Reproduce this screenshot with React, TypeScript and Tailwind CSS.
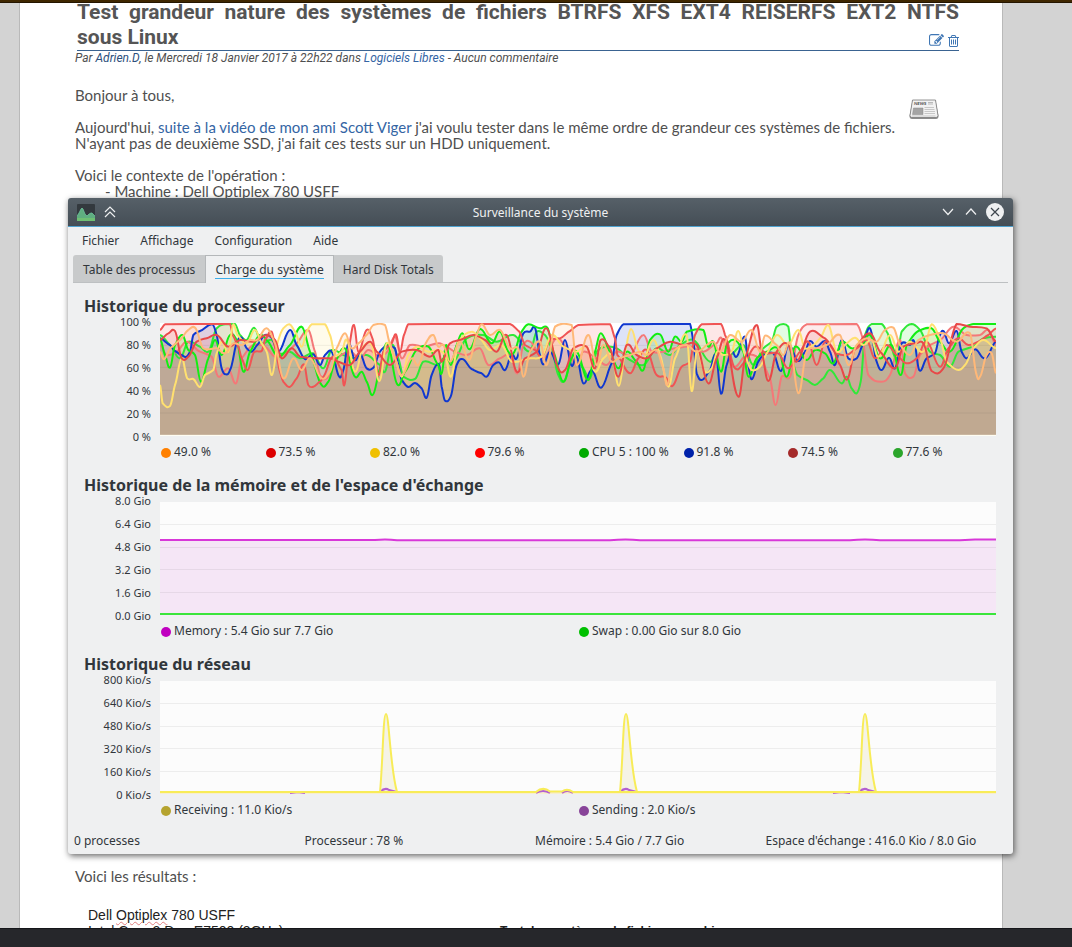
import type { ReactNode } from 'react';

type Trace = { color: string; points: number[][] };

// Samples are stored in three runs; shift moves a run to its place on the x axis.
function shift(dx: number, run: string) {
  return run.split(' ').map((pair) => {
    const [x, y] = pair.split(',').map(Number);
    return [x + dx, y];
  });
}

function cpu(color: string, a: string, b: string, c: string): Trace {
  return { color, points: [...shift(-30, a), ...shift(810, b), ...shift(1650, c)] };
}

const cpuTraces: Trace[] = [
  cpu(
    '#30e838',
    '30,60 60,90 90,130 115,80 150,95 175,110 200,40 225,28 255,27 270,60 290,75 312,38 335,85 365,75 390,115 420,110 450,130 490,115 520,160 545,105 580,120 610,130 650,120 690,150 705,170 725,90 745,130 760,185 795,192 820,140 865,150',
    '40,130 70,140 110,70 160,60 200,80 250,60 300,110 320,50 345,60 365,100 385,180 402,198 430,120 460,160 480,190 500,110 530,95 560,100 600,135 640,150 680,100 720,120 750,90 790,75 840,140',
    '20,110 60,120 100,90 130,150 160,100 185,80 200,35 220,27 235,35 245,130 262,180 290,195 315,210 340,190 360,165 395,205 410,185 425,220 440,235 452,200 465,60 485,27 515,27 530,50 560,130 575,50 605,27 630,45 660,110 690,120 720,155 745,110 790,95 820,70 858,65'
  ),
  cpu(
    '#f47878',
    '30,90 50,120 80,110 110,80 150,110 185,125 205,185 235,160 258,205 275,130 310,90 345,95 375,125 400,120 440,85 475,45 495,110 510,180 530,190 560,130 600,110 630,130 655,105 690,125 712,110 735,65 755,130 780,90 820,95 865,85',
    '40,90 75,110 110,120 150,100 175,150 210,130 240,120 262,175 280,90 300,80 340,130 380,70 410,100 440,150 460,110 500,130 530,150 560,110 600,120 640,60 665,110 700,110 735,100 780,95 820,110 860,85',
    '35,70 70,155 110,120 150,130 180,190 197,270 215,185 240,185 265,60 290,28 440,27 455,60 475,180 515,200 540,180 570,75 585,175 610,185 630,120 660,90 690,75 730,35 770,60 810,60 835,45 858,90'
  ),
  cpu(
    '#1038d0',
    '30,70 60,90 75,108 95,120 108,126 120,110 130,60 150,48 187,28 200,60 215,160 228,178 240,165 262,80 275,68 290,100 305,110 320,92 345,60 365,68 385,110 420,45 440,90 465,132 490,118 510,150 525,120 545,110 568,185 580,165 595,85 615,135 630,115 650,160 670,158 690,110 710,92 735,100 745,150 755,195 775,216 795,204 815,220 830,248 845,180 860,150 868,152',
    '35,215 45,257 62,245 80,150 97,132 125,162 155,175 170,185 190,150 207,142 225,165 245,118 260,130 280,55 300,50 315,38 330,120 340,148 360,110 385,148 405,75 425,152 440,125 460,205 485,165 513,218 545,145 560,60 580,28 780,27 790,80 800,175 815,195 840,165 858,120',
    '33,236 50,150 65,110 80,125 105,65 115,150 125,193 145,140 160,120 190,115 213,168 235,90 265,138 285,110 300,78 320,95 345,78 360,110 375,150 395,75 415,130 440,130 460,85 480,40 500,140 515,165 537,128 555,160 575,85 600,90 612,78 628,166 650,130 675,115 690,60 700,48 717,85 740,48 755,110 770,130 795,103 825,130 858,80'
  ),
  cpu(
    '#12ee12',
    '30,70 45,120 60,158 75,90 97,60 115,105 135,120 153,200 175,130 195,75 215,120 240,60 260,75 280,170 300,110 330,60 350,75 385,125 420,90 455,35 480,110 515,210 535,200 555,140 585,100 615,185 635,170 650,200 668,240 690,160 712,85 742,208 765,170 800,105 835,95 865,150',
    '35,175 48,90 62,150 80,90 97,55 118,103 150,42 185,85 210,50 235,110 250,115 275,50 295,28 330,40 352,38 370,110 400,200 425,130 440,110 475,195 495,110 512,55 540,110 565,160 590,110 620,140 640,165 660,75 690,58 715,110 735,65 755,80 770,50 820,45 835,95 850,80',
    '33,170 50,90 75,75 100,110 115,185 140,130 170,110 205,100 230,185 255,95 290,135 315,105 345,115 370,145 395,80 425,100 455,90 480,60 510,130 545,90 572,180 590,90 625,48 665,40 690,80 720,110 760,40 790,27 858,27'
  ),
  cpu(
    '#f05454',
    '30,45 45,28 240,27 248,60 265,95 275,130 293,165 312,112 335,108 345,75 365,50 378,110 390,170 400,200 418,216 440,190 462,148 475,210 490,215 510,200 520,185 548,125 575,165 583,210 598,90 612,30 625,110 650,45 668,72 685,180 700,110 725,85 738,58 750,110 762,60 775,28 865,27',
    '40,27 240,27 268,50 285,90 315,105 335,125 360,75 390,70 420,48 445,30 540,28 555,70 562,120 600,175 625,130 650,105 680,180 705,185 727,213 755,155 780,140 795,60 815,28 865,27',
    '33,27 45,60 75,160 105,140 135,95 170,115 205,115 235,160 270,110 295,80 320,150 345,80 380,115 410,120 440,100 470,75 495,130 530,90 560,120 590,145 620,130 650,80 690,155 715,100 745,70 775,90 805,80 835,60 858,40'
  ),
  cpu(
    '#ffe070',
    '30,210 38,265 60,273 75,210 95,130 112,190 130,192 150,216 165,180 190,165 200,115 215,80 235,110 250,28 262,60 290,85 315,45 335,85 350,110 366,180 385,75 400,40 418,28 435,50 455,95 470,50 485,28 525,28 540,60 555,120 575,110 590,75 615,170 640,95 665,90 688,198 710,85 735,130 755,185 775,120 800,95 835,110 865,105',
    '45,120 63,185 85,80 125,50 150,70 180,105 215,90 245,140 300,130 335,125 365,60 400,95 440,110 470,95 495,170 520,130 545,120 567,212 585,110 603,42 625,105 640,130 670,75 690,120 715,215 735,130 770,60 785,228 800,110 825,170 845,160 862,110',
    '40,120 65,110 85,48 105,120 125,165 150,155 170,115 200,60 235,90 265,45 285,100 310,90 330,70 355,30 380,110 410,85 435,68 460,90 485,75 505,125 540,60 565,110 600,80 640,110 665,28 690,70 710,140 745,165 765,150 790,100 820,75 858,100'
  ),
  cpu(
    '#e84848',
    '30,75 55,55 75,48 95,130 115,125 140,80 170,70 200,60 235,95 270,75 310,80 350,60 375,75 395,130 425,100 450,125 500,130 540,130 565,140 600,150 630,110 660,80 680,110 720,150 755,110 800,105 840,125 865,105',
    '35,140 60,85 90,75 130,60 165,75 200,110 230,60 260,170 285,130 320,110 350,40 385,160 405,165 430,100 470,95 495,160 512,75 540,100 565,185 590,90 620,120 650,130 680,100 720,80 760,90 800,90 835,205 860,130',
    '45,75 85,245 105,130 140,30 155,110 175,198 200,110 230,85 260,140 300,50 345,70 365,95 390,150 412,193 435,100 480,55 510,110 555,160 580,95 620,85 640,85 665,168 700,160 740,27 780,35 830,40 858,80'
  ),
  cpu(
    '#ffb878',
    '30,110 42,133 60,100 90,75 115,45 135,38 160,100 200,100 225,115 250,85 275,90 300,75 320,75 350,40 375,85 400,190 430,130 455,165 480,130 515,190 540,170 560,100 585,55 605,100 625,85 650,60 670,30 690,26 705,30 718,80 735,130 755,180 785,130 805,150 830,80 850,60 865,95',
    '40,90 60,140 90,80 118,135 140,60 155,28 180,60 210,45 240,100 265,100 280,185 300,110 330,80 350,150 375,35 400,26 425,30 440,150 475,60 500,150 520,90 545,140 565,130 600,120 630,110 650,120 680,105 700,160 712,210 730,110 770,90 800,110 850,80',
    '30,110 60,60 95,80 125,45 150,110 165,62 200,90 220,120 240,85 265,235 290,110 320,100 350,90 390,60 415,150 440,90 470,70 500,80 525,45 550,38 570,90 600,120 625,75 660,60 700,55 740,80 780,55 800,180 810,185 830,120 845,115 858,175'
  ),
];

const fillOrder = [0, 7, 1, 5, 3, 2, 6, 4];

// Catmull-Rom through the samples; control points never rise above the 100 % line.
function smooth(points: number[][], top: number) {
  let d = `M${points[0][0]},${points[0][1]}`;
  for (let i = 0; i < points.length - 1; i++) {
    const p0 = points[i - 1] ?? points[i];
    const p1 = points[i];
    const p2 = points[i + 1];
    const p3 = points[i + 2] ?? p2;
    const c1y = Math.max(top, p1[1] + (p2[1] - p0[1]) / 7);
    const c2y = Math.max(top, p2[1] - (p3[1] - p1[1]) / 7);
    const dx = (p2[0] - p1[0]) / 2.4;
    d += `C${p1[0] + dx},${c1y} ${p2[0] - dx},${c2y} ${p2[0]},${p2[1]}`;
  }
  return d;
}

const cpuLegend = [
  { color: '#ff8000', label: '49.0 %' },
  { color: '#dc0000', label: '73.5 %' },
  { color: '#f0c000', label: '82.0 %' },
  { color: '#ff0000', label: '79.6 %' },
  { color: '#00aa00', label: 'CPU 5 : 100 %' },
  { color: '#0022aa', label: '91.8 %' },
  { color: '#a52a2a', label: '74.5 %' },
  { color: '#2ba52b', label: '77.6 %' },
];

const memoryLegend = [
  { color: '#c000c0', label: 'Memory : 5.4 Gio sur 7.7 Gio' },
  { color: '#00c000', label: 'Swap : 0.00 Gio sur 8.0 Gio' },
];

const networkLegend = [
  { color: '#b5a32f', label: 'Receiving : 11.0 Kio/s' },
  { color: '#884499', label: 'Sending : 2.0 Kio/s' },
];

const menus = ['Fichier', 'Affichage', 'Configuration', 'Aide'];
const status = ['0 processes', 'Processeur : 78 %', 'Mémoire : 5.4 Gio / 7.7 Gio', "Espace d'échange : 416.0 Kio / 8.0 Gio"];

function CpuPlot() {
  return (
    <svg viewBox="0 24 2508 339" preserveAspectRatio="none" className="block h-full w-full bg-white">
      {fillOrder.map((n) => (
        <path key={n} d={`${smooth(cpuTraces[n].points, 27)}V360H0Z`} fill={cpuTraces[n].color} fillOpacity="0.14" />
      ))}
      {[91, 157, 226, 294].map((y) => (
        <path key={y} d={`M0,${y}H2508`} stroke="#000" strokeOpacity="0.06" vectorEffect="non-scaling-stroke" />
      ))}
      {cpuTraces.map((t) => (
        <path
          key={t.color}
          d={smooth(t.points, 27)}
          fill="none"
          stroke={t.color}
          strokeWidth="2"
          vectorEffect="non-scaling-stroke"
        />
      ))}
      <path d="M0,361H2508" stroke="#fffdf0" strokeWidth="1" vectorEffect="non-scaling-stroke" />
    </svg>
  );
}

function GridLines() {
  return (
    <>
      {[22, 45, 67, 90].map((y) => (
        <path key={y} d={`M0,${y}.5H836`} stroke="#000" strokeOpacity="0.06" vectorEffect="non-scaling-stroke" />
      ))}
    </>
  );
}

function MemoryPlot() {
  const line = 'M0,38H215Q226,37 237,38.2H450Q466,37 480,38.2H690Q705,37 720,38.2L800,38.2L815,37.6H836';
  return (
    <svg viewBox="0 0 836 113" preserveAspectRatio="none" className="block h-full w-full bg-[#fcfcfc]">
      <path d={`${line}V111H0Z`} fill="#f5e6f6" />
      <GridLines />
      <path d={line} fill="none" stroke="#d838d8" strokeWidth="2" vectorEffect="non-scaling-stroke" />
      <path d="M0,112H836" stroke="#3be53b" strokeWidth="2" vectorEffect="non-scaling-stroke" />
    </svg>
  );
}

function NetworkPlot() {
  const peaks = [226, 466, 705];
  return (
    <svg viewBox="0 0 836 113" preserveAspectRatio="none" className="block h-full w-full bg-[#fcfcfc]">
      <GridLines />
      <path d="M0,112H836" stroke="#f3dfa0" strokeWidth="1" vectorEffect="non-scaling-stroke" />
      <path
        d="M130,112L138,111L145,112M376,112Q383,108 390,112M402,112Q407,108 413,112M673,112L681,111L690,112"
        fill="none"
        stroke="#b45fd0"
        strokeWidth="2"
        vectorEffect="non-scaling-stroke"
      />
      {peaks.map((x) => (
        <path key={x} d={`M${x - 6},111C${x - 3},80 ${x - 3},33 ${x},33C${x + 3},33 ${x + 4},86 ${x + 11},111Z`} fill="#f5f3e6" />
      ))}
      {peaks.map((x) => (
        <path
          key={x}
          d={`M${x - 6},111Q${x - 1},106 ${x + 3},109L${x + 11},111`}
          fill="none"
          stroke="#b45fd0"
          strokeWidth="2"
          vectorEffect="non-scaling-stroke"
        />
      ))}
      <path
        d={`M0,111H376Q383,105 390,110.5H402Q407,107 413,111H836${peaks
          .map((x) => `M${x - 6},111C${x - 3},80 ${x - 3},33 ${x},33C${x + 3},33 ${x + 4},86 ${x + 11},111`)
          .join('')}`}
        fill="none"
        stroke="#f8ec58"
        strokeWidth="2"
        vectorEffect="non-scaling-stroke"
      />
    </svg>
  );
}

interface GraphProps {
  title: string;
  axis: string[];
  legend: { color: string; label: string }[];
  columns: string;
  children: ReactNode;
}

function Graph({ title, axis, legend, columns, children }: GraphProps) {
  return (
    <section>
      <h2 className="text-base leading-5 font-bold text-[#31363b]">{title}</h2>
      <div className="mt-[7px] flex h-[113px]">
        <div className="-my-[7px] mr-[9px] flex w-[67px] shrink-0 flex-col justify-between text-right text-[11px] leading-3">
          {axis.map((a) => (
            <span key={a}>{a}</span>
          ))}
        </div>
        <div className="min-w-0 flex-1">{children}</div>
      </div>
      <ul className={`mt-1.5 ml-[76px] grid h-5 items-center ${columns}`}>
        {legend.map((l) => (
          <li key={l.label} className="flex items-center gap-[3px] pl-px whitespace-nowrap">
            <svg viewBox="0 0 10 10" className="mt-0.5 size-[10px]">
              <circle cx="5" cy="5" r="5" fill={l.color} />
            </svg>
            {l.label}
          </li>
        ))}
      </ul>
    </section>
  );
}

function TitleBar() {
  return (
    <header className="grid h-[29px] grid-cols-[1fr_auto_1fr] items-center rounded-t-[3px] border-b border-[#4fa3d1] bg-linear-to-b from-[#566068] to-[#454e56] px-[9px] text-[#eff0f1]">
      <div className="flex items-center gap-[9px]">
        <svg viewBox="0 0 18 17" className="h-[17px] w-[18px]">
          <rect width="18" height="17" rx="1" fill="#33393e" />
          <path d="M0,17V12L2,9L4,5L5,4L6,5L8,10L10,12L12,10L14,9L15,9L16,10L18,12V17Z" fill="#5fae80" />
          <path d="M0,12L2,9L4,5L5,4L6,5L8,10L10,12L12,10L14,9L15,9L16,10L18,12" fill="none" stroke="#73c8a5" strokeWidth="0.7" />
          <path d="M0,14H18V17H0Z" fill="#6fbf73" />
        </svg>
        <button type="button" aria-label="Garder au-dessus">
          <svg viewBox="0 0 12 12" className="size-3" fill="none" stroke="currentColor" strokeWidth="1.2">
            <path d="M1,6L6,1L11,6M1,11L6,6L11,11" />
          </svg>
        </button>
      </div>
      <h1 className="pt-0.5">Surveillance du système</h1>
      <div className="flex items-center justify-end gap-[7px]">
        <button type="button" aria-label="Réduire" className="grid w-4 place-items-center">
          <svg viewBox="0 0 12 8" className="h-2 w-3" fill="none" stroke="currentColor" strokeWidth="1.2">
            <path d="M1,1L6,6.500L11,1" />
          </svg>
        </button>
        <button type="button" aria-label="Maximiser" className="grid w-4 place-items-center">
          <svg viewBox="0 0 12 8" className="h-2 w-3" fill="none" stroke="currentColor" strokeWidth="1.2">
            <path d="M1,6.500L6,1L11,6.500" />
          </svg>
        </button>
        <button type="button" aria-label="Fermer" className="grid size-[18px] place-items-center rounded-full bg-[#eff0f1] text-[#3e464d]">
          <svg viewBox="0 0 10 10" className="size-[10px]" fill="none" stroke="currentColor" strokeWidth="1.2">
            <path d="M1,1L9,9M9,1L1,9" />
          </svg>
        </button>
      </div>
    </header>
  );
}

function MonitorWindow() {
  return (
    <div className="absolute top-[198px] right-[59px] left-[68px] rounded-[3px] bg-[#eff0f1] font-['Noto_Sans','Open_Sans',sans-serif] text-[12px] leading-4 text-[#31363b] shadow-[1px_2px_6px_rgba(0,0,0,0.6)]">
      <TitleBar />
      <nav className="flex h-7 items-center gap-[21px] px-[14px]">
        {menus.map((m) => (
          <button key={m} type="button">
            {m}
          </button>
        ))}
      </nav>
      <div role="tablist" className="mx-[5px] flex h-7 border-b border-[#bdc0c2]">
        <button type="button" role="tab" aria-selected="false" className="rounded-tl-[3px] bg-[#c8cacb] px-[10px] pt-0.5">
          Table des processus
        </button>
        <button type="button" role="tab" aria-selected="true" className="-mb-px border-x border-t border-[#b4b7b9] bg-[#eff0f1] px-[9px] pt-0.5">
          <span className="block border-b border-[#3daee9]">Charge du système</span>
        </button>
        <button type="button" role="tab" aria-selected="false" className="rounded-tr-[3px] bg-[#c8cacb] px-[9px] pt-0.5">
          Hard Disk Totals
        </button>
      </div>
      <div className="flex flex-col gap-[13px] pt-[13px] pr-[17px] pb-[13px] pl-4">
        <Graph
          title="Historique du processeur"
          axis={['100 %', '80 %', '60 %', '40 %', '20 %', '0 %']}
          legend={cpuLegend}
          columns="grid-cols-8"
        >
          <CpuPlot />
        </Graph>
        <Graph
          title="Historique de la mémoire et de l'espace d'échange"
          axis={['8.0 Gio', '6.4 Gio', '4.8 Gio', '3.2 Gio', '1.6 Gio', '0.0 Gio']}
          legend={memoryLegend}
          columns="grid-cols-2"
        >
          <MemoryPlot />
        </Graph>
        <Graph
          title="Historique du réseau"
          axis={['800 Kio/s', '640 Kio/s', '480 Kio/s', '320 Kio/s', '160 Kio/s', '0 Kio/s']}
          legend={networkLegend}
          columns="grid-cols-2"
        >
          <NetworkPlot />
        </Graph>
      </div>
      <footer className="grid grid-cols-4 pr-[17px] pb-[5px] pl-1.5 whitespace-nowrap">
        {status.map((s) => (
          <span key={s}>{s}</span>
        ))}
      </footer>
    </div>
  );
}

function EditIcon() {
  return (
    <svg viewBox="0 0 1792 1792" className="size-[15px]" fill="currentColor">
      <path d="M888 1184l116-116-152-152-116 116v56h96v96h56zm440-720q-16-16-33 1l-350 350q-17 17-1 33t33-1l350-350q17-17 1-33zm80 594v190q0 119-84.500 203.500t-203.500 84.500h-832q-119 0-203.500-84.500t-84.500-203.500v-832q0-119 84.500-203.500t203.500-84.500h832q63 0 117 25 15 7 18 23 3 17-9 29l-49 49q-14 14-32 8-23-6-45-6h-832q-66 0-113 47t-47 113v832q0 66 47 113t113 47h832q66 0 113-47t47-113v-126q0-13 9-22l64-64q15-15 35-7t20 29zm-96-738l288 288-672 672h-288v-288zm444 132l-92 92-288-288 92-92q28-28 68-28t68 28l152 152q28 28 28 68t-28 68z" />
    </svg>
  );
}

function TrashIcon() {
  return (
    <svg viewBox="192 128 1408 1536" className="h-3 w-[11px]" fill="currentColor">
      <path d="M704 736v576q0 14-9 23t-23 9h-64q-14 0-23-9t-9-23v-576q0-14 9-23t23-9h64q14 0 23 9t9 23zm256 0v576q0 14-9 23t-23 9h-64q-14 0-23-9t-9-23v-576q0-14 9-23t23-9h64q14 0 23 9t9 23zm256 0v576q0 14-9 23t-23 9h-64q-14 0-23-9t-9-23v-576q0-14 9-23t23-9h64q14 0 23 9t9 23zm128 724v-948h-896v948q0 22 7 40.500t14.500 27 10.500 8.500h832q3 0 10.500-8.500t14.500-27 7-40.500zm-672-1076h448l-48-117q-7-9-17-11h-317q-10 2-17 11zm928 32v64q0 14-9 23t-23 9h-96v948q0 83-47 143.500t-113 60.500h-832q-66 0-113-58.500t-47-141.500v-952h-96q-14 0-23-9t-9-23v-64q0-14 9-23t23-9h309l70-167q15-37 54-63t79-26h320q40 0 79 26t54 63l70 167h309q14 0 23 9t9 23z" />
    </svg>
  );
}

function NewsIcon() {
  return (
    <svg viewBox="0 0 30 21" className="h-[21px] w-[30px]">
      <path d="M3.500,1H26.500L29.500,17Q29.500,20 27,20H3Q0.500,20 0.500,17Z" fill="#8c8c8c" />
      <path d="M3.500,1H26.500L29,16.500Q29,18.500 27,18.500H3Q1,18.500 1,16.500Z" fill="#f2f2f2" stroke="#7a7a7a" strokeWidth="0.8" />
      <text x="5" y="5.800" fontSize="4.500" fontWeight="bold" fontStyle="italic" fill="#444">
        NEWS
      </text>
      <path d="M19,3.500H24M19,5H24" stroke="#aaa" strokeWidth="0.8" />
      <path d="M4.500,9H14V15.500H3.500Z" fill="#a4a4a4" stroke="#888" strokeWidth="0.5" />
      <path d="M15.500,8.500H25M15.500,10.500H25.500M15.500,12.500H26M15.500,14.500H26M3,17H26.500" stroke="#bbb" strokeWidth="0.8" />
    </svg>
  );
}

function Article() {
  return (
    <article className="mr-[69px] ml-[19px] flow-root h-full border-x border-[#b9b9b9] bg-white pr-[43px] pl-[55px] font-[Lato,sans-serif] text-[15px] leading-4 text-[#4f4f4f]">
      <div className="-mt-[3px] ml-0.5 border-b border-[#3a6391]">
        <h1 className="font-[Roboto,sans-serif] text-[21px] leading-[25px] font-bold text-[#555]">
          <span className="block whitespace-nowrap [text-align-last:justify]">
            Test grandeur nature des systèmes de fichiers BTRFS XFS EXT4 REISERFS EXT2 NTFS
          </span>
          <span className="flex items-center justify-between">
            sous Linux
            <span className="flex items-center gap-1 pt-1.5 text-[#3f76b4]">
              <a href="#edit" aria-label="Modifier">
                <EditIcon />
              </a>
              <a href="#delete" aria-label="Supprimer">
                <TrashIcon />
              </a>
            </span>
          </span>
        </h1>
      </div>
      <p className="font-[Roboto,sans-serif] text-[12px] leading-[15px] italic">
        Par <span className="text-[#2d4f7c]">Adrien.D</span>, le Mercredi 18 Janvier 2017 à 22h22 dans{' '}
        <a href="#logiciels" className="text-[#3465a4]">
          Logiciels Libres
        </a>{' '}
        - Aucun commentaire
      </p>
      <div className="mt-[21px] flex justify-between pr-5">
        <div>
          <p>Bonjour à tous,</p>
          <p className="mt-4">
            Aujourd'hui,{' '}
            <a href="#video" className="text-[#3465a4]">
              suite à la vidéo de mon ami Scott Viger
            </a>{' '}
            j'ai voulu tester dans le même ordre de grandeur ces systèmes de fichiers.
            <br />
            N'ayant pas de deuxième SSD, j'ai fait ces tests sur un HDD uniquement.
          </p>
          <p className="mt-4">Voici le contexte de l'opération :</p>
          <p className="ml-[30px]">- Machine : Dell Optiplex 780 USFF</p>
        </div>
        <div className="pt-3">
          <NewsIcon />
        </div>
      </div>
      <p className="mt-[669px]">Voici les résultats :</p>
      <div className="mt-[23px] ml-[13px] grid grid-cols-[412px_1fr] font-['Liberation_Sans',sans-serif] text-[14px] leading-4 text-[#222]">
        <p>
          Dell <span className="underline decoration-[#e08080] decoration-wavy decoration-1">Optiplex</span> 780 USFF
          <br />
          Intel Core 2 Duo E7500 (3GHz)
        </p>
        <p className="self-end text-[12px] font-bold">Test des systèmes de fichiers sous Linux</p>
      </div>
    </article>
  );
}

export default function App() {
  return (
    <div className="flex h-screen flex-col overflow-hidden bg-[#d3d3d3]">
      <div className="z-10 h-[3px] shrink-0 border-b border-[#241500] bg-[#3f2700]" />
      <main className="min-h-0 flex-1 overflow-hidden">
        <Article />
      </main>
      <MonitorWindow />
      <footer className="z-10 h-[19px] shrink-0 border-t border-[#15161a] bg-[#26272b]" />
    </div>
  );
}
